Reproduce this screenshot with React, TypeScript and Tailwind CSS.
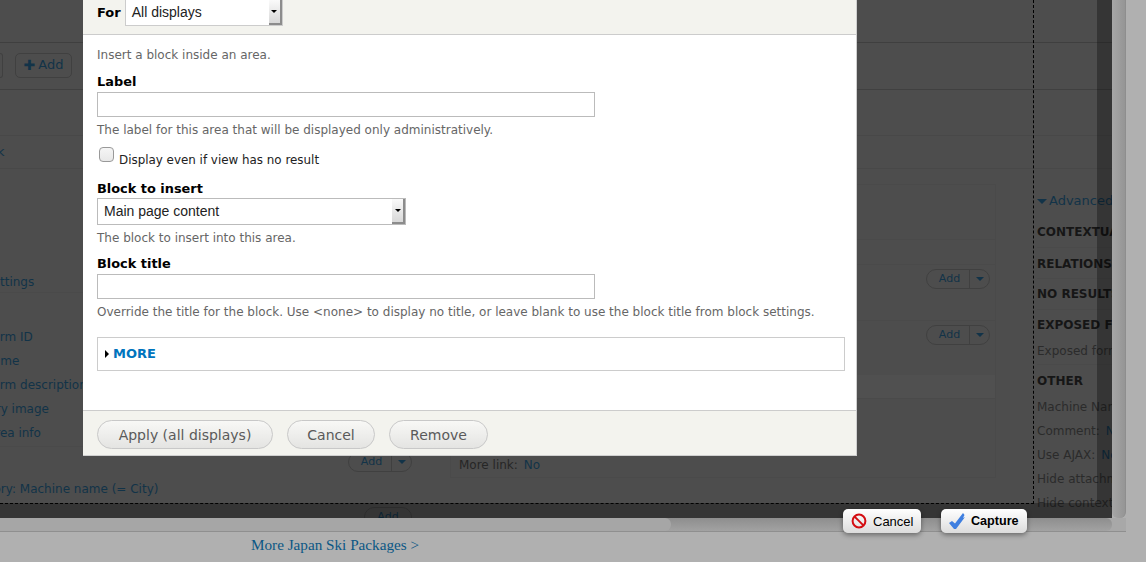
const sans = "font-['DejaVu_Sans',sans-serif]";
const arial = "font-['Liberation_Sans',Arial,sans-serif]";

const leftLinks = [
  { text: 'Form ID', indent: '-ml-[14px]' },
  { text: 'Name', indent: '-ml-[16px]' },
  { text: 'Form description', indent: '-ml-[14px]' },
  { text: 'Gallery image', indent: '-ml-[35px]' },
  { text: 'Area info', indent: '-ml-[13px]' },
];

function AddPill() {
  return (
    <div className="flex h-[20px] w-[64px] items-center rounded-full border border-[#404040] text-[11px] text-[#123348]">
      <span className="flex-1 pl-[3px] text-center">Add</span>
      <span className="flex h-full w-[20px] items-center justify-center border-l border-[#404040]">
        <span className="h-0 w-0 border-x-[4px] border-t-[4px] border-x-transparent border-t-[#123348]" />
      </span>
    </div>
  );
}

function FakeSelect({ label, className }: { label: string; className: string }) {
  return (
    <div className={`flex items-stretch border border-[#bbb] bg-white ${arial} text-[14px] text-[#222] ${className}`}>
      <span className="flex flex-1 items-center pl-[6px]">{label}</span>
      <span className="flex w-[13px] items-center justify-center border-r-2 border-b-2 border-[#8c8c8c] bg-gradient-to-b from-[#fafafa] to-[#d8d8d8]">
        <span className="h-0 w-0 border-x-[3px] border-t-[3px] border-x-transparent border-t-black" />
      </span>
    </div>
  );
}

function FooterButton({ children, className }: { children: string; className: string }) {
  return (
    <button className={`h-[29px] rounded-full border border-[#c8c8c8] bg-gradient-to-b from-[#f8f8f6] to-[#e4e4e2] pt-[1px] text-center text-[14px] text-[#5a5a5a] ${className}`}>
      {children}
    </button>
  );
}

function DimmedPage() {
  return (
    <div className={`relative h-[518px] w-[1112px] shrink-0 overflow-hidden bg-[#4d4d4d] ${sans} text-[12px] whitespace-nowrap`}>
      <div className="h-[43px] border-b border-[#3f3f3f]" />
      <div className="flex h-[47px] items-center gap-[12px] border-b border-[#404040] pb-[2px] text-[13px]">
        <div className="h-[25px] w-[3px] rounded-r-[5px] border border-l-0 border-[#404040]" />
        <div className="flex h-[25px] w-[57px] items-center justify-center gap-[3px] rounded-[5px] border border-[#404040] text-[#123348]">
          <span className="text-[14px] font-bold leading-none">✚</span>Add
        </div>
      </div>
      <div className="h-[46px] border-b border-[#484848]" />
      <div className="flex h-[33px] items-center border-b border-[#484848] text-[13px] text-[#123348]">
        <span className="-ml-[3px]">k</span>
      </div>

      <div className="mt-[15px] flex">
        {/* left column, mostly behind the dialog */}
        <div className="flex w-[416px] shrink-0 flex-col text-[#123348]">
          <div className="mt-[87px] flex h-[22px] items-center border-b border-[#4a4a4a]">
            <span className="-ml-[15px]">Settings</span>
          </div>
          <div className="mt-[34px] flex flex-col gap-[4px]">
            {leftLinks.map((link) => (
              <div key={link.text} className="flex h-[20px] items-center">
                <span className={link.indent}>{link.text}</span>
              </div>
            ))}
          </div>
          <div className="mt-[3px] flex justify-end border-t border-[#4a4a4a] pr-[4px] pt-[5px]">
            <AddPill />
          </div>
          <div className="mt-[7px] flex h-[20px] items-center">
            <span className="-ml-[42px]">Category: Machine name (= City)</span>
          </div>
          <div className="mt-[8px] flex justify-end pr-[4px]">
            <div className="flex h-[20px] w-[48px] items-center justify-center rounded-full border border-[#404040] text-[11px] text-[#123348]">
              Add
            </div>
          </div>
        </div>

        {/* middle column */}
        <div className="ml-[34px] flex h-[294px] w-[546px] shrink-0 flex-col border border-[#4a4a4a]">
          <div className="h-[55px] border-b border-[#4a4a4a]" />
          <div className="h-[25px] border-b border-[#4a4a4a]" />
          <div className="flex h-[56px] justify-end border-b border-[#4a4a4a] pr-[5px] pt-[4px]">
            <AddPill />
          </div>
          <div className="flex h-[54px] justify-end pr-[5px] pt-[4px]">
            <AddPill />
          </div>
          <div className="h-[24px] border-b border-[#4a4a4a] bg-[#505050]" />
          <div className="flex flex-1 items-end px-[8px] pb-[3px] text-[#262626]">
            More link:<span className="ml-[6px] text-[#123348]">No</span>
          </div>
        </div>

        {/* right column */}
        <div className="ml-[38px] flex flex-col pl-[3px] text-[#2b2b2b]">
          <div className="flex h-[32px] items-center gap-[2px] pt-[2px] text-[13px] text-[#123348]">
            <span className="h-0 w-0 border-x-[5px] border-t-[5px] border-x-transparent border-t-[#123348]" />
            Advanced
          </div>
          <div className="flex h-[32px] items-center border-b border-[#4a4a4a] font-bold text-[#161616]">CONTEXTUAL</div>
          <div className="flex h-[31px] items-center border-b border-[#4a4a4a] pt-[1px] font-bold text-[#161616]">RELATIONSHIPS</div>
          <div className="flex h-[31px] items-center border-b border-[#4a4a4a] font-bold text-[#161616]">NO RESULTS</div>
          <div className="flex h-[30px] items-center font-bold text-[#161616]">EXPOSED FORM</div>
          <div className="flex h-[25px] items-center border-b border-[#4a4a4a] pb-[3px]">Exposed form</div>
          <div className="flex h-[32px] items-center font-bold text-[#161616]">OTHER</div>
          <div className="flex h-[22px] items-center pb-[2px]">Machine Name</div>
          <div className="flex h-[24px] items-center">Comment:<span className="ml-[6px] text-[#123348]">No</span></div>
          <div className="flex h-[24px] items-center">Use AJAX:<span className="ml-[6px] text-[#123348]">No</span></div>
          <div className="flex h-[24px] items-center">Hide attachment</div>
          <div className="flex h-[24px] items-center">Hide contextual</div>
        </div>
      </div>

      {/* selection rectangle and its shade */}
      <div className="absolute left-0 top-0 h-[504px] w-[1034px] border-r border-b border-dashed border-black" />
      <div className="absolute bottom-0 left-0 h-[15px] w-full bg-black/30" />
      <div className="absolute right-0 top-0 h-[503px] w-[15px] bg-black/30" />
    </div>
  );
}

function BlockDialog() {
  return (
    <div className={`absolute left-[83px] top-0 flex h-[456px] w-[774px] flex-col border-r border-b border-[#cfcfcf] bg-white ${sans} text-[12px] text-[#666]`}>
      <div className="flex h-[35px] items-start gap-[4px] border-b border-[#ccc] bg-[#f3f3ee] pl-[14px]">
        <span className="pt-[3px] text-[13px] font-bold text-black">For</span>
        <FakeSelect label="All displays" className="h-[26px] w-[158px] border-t-0 border-[#ccc]" />
      </div>

      <div className="flex flex-1 flex-col px-[14px]">
        <p className="mt-[12px] h-[16px] leading-[16px]">Insert a block inside an area.</p>
        <label className="mt-[11px] h-[16px] text-[12.9px] font-bold leading-[16px] text-black">Label</label>
        <input className="mt-[2px] h-[25px] w-[498px] border border-[#bbb] bg-white" />
        <p className="mt-[5px] h-[16px] leading-[16px]">The label for this area that will be displayed only administratively.</p>
        <div className="mt-[9px] flex h-[19px] items-start">
          <input type="checkbox" className="ml-[2px] h-[15px] w-[15px] appearance-none rounded-[4px] border border-[#999] bg-gradient-to-b from-[#f5f5f5] to-[#e8e8e8]" />
          <span className="ml-[5px] pt-[5px] text-[11.9px] leading-[16px] text-[#222]">Display even if view has no result</span>
        </div>
        <label className="mt-[15px] h-[16px] text-[12.9px] font-bold leading-[16px] text-black">Block to insert</label>
        <FakeSelect label="Main page content" className="mt-[1px] h-[27px] w-[309px]" />
        <p className="mt-[5px] h-[16px] leading-[16px]">The block to insert into this area.</p>
        <label className="mt-[10px] h-[16px] text-[12.9px] font-bold leading-[16px] text-black">Block title</label>
        <input className="mt-[2px] h-[25px] w-[498px] border border-[#bbb] bg-white" />
        <p className="mt-[5px] h-[16px] leading-[16px]">
          {'Override the title for the block. Use <none> to display no title, or leave blank to use the block title from block settings.'}
        </p>
        <div className="mt-[17px] flex h-[34px] w-[748px] items-center gap-[4px] border border-[#ccc] pl-[7px]">
          <span className="h-0 w-0 border-y-[4px] border-l-[4px] border-y-transparent border-l-black" />
          <span className="text-[13px] font-bold text-[#0074bd]">MORE</span>
        </div>
      </div>

      <div className="flex h-[45px] items-start gap-[14px] border-t border-[#ccc] bg-[#f3f3ee] pl-[14px] pt-[9px]">
        <FooterButton className="w-[176px]">Apply (all displays)</FooterButton>
        <FooterButton className="w-[88px]">Cancel</FooterButton>
        <FooterButton className="w-[99px]">Remove</FooterButton>
      </div>
    </div>
  );
}

function CaptureBar() {
  return (
    <div className={`absolute left-[843px] top-[509px] flex gap-[20px] ${arial} text-[13px] text-black`}>
      <button className="flex h-[24px] w-[78px] items-center gap-[6px] rounded-[5px] bg-gradient-to-b from-white to-[#dcdcdc] pl-[8px] shadow-[0_2px_5px_rgba(0,0,0,0.4)]">
        <svg width="16" height="16" viewBox="0 0 16 16" fill="none" stroke="#d40d12" strokeWidth="2">
          <circle cx="8" cy="8" r="6.4" />
          <path d="M3.6 3.6l8.8 8.8" />
        </svg>
        <span className="pt-[1px]">Cancel</span>
      </button>
      <button className="flex h-[24px] w-[86px] items-center gap-[5px] rounded-[5px] bg-gradient-to-b from-white to-[#dcdcdc] pl-[7px] font-bold shadow-[0_2px_5px_rgba(0,0,0,0.4)]">
        <svg width="18" height="18" viewBox="0 0 18 18" fill="#3f7fe0">
          <path d="M1 11L4 9L7 11.5L15 1L16.5 3L15 6L17 5L8 17L6 17Z" />
        </svg>
        <span className="pt-[1px] text-[12.6px]">Capture</span>
      </button>
    </div>
  );
}

export default function App() {
  return (
    <div className="relative h-[562px] w-[1146px] overflow-hidden bg-[#b0b0b0]">
      <div className="flex h-[518px]">
        <DimmedPage />
        <div className="h-full w-[14px] rounded-b-[6px] border-r border-[#8e8e8e] bg-gradient-to-r from-[#a6a6a6] to-[#959595]" />
      </div>

      <div className="flex h-[14px] w-[1126px] border-b border-[#8f8f8f] bg-[#a8a8a8]">
        <div className="flex h-full w-[1112px] rounded-r-[6px] bg-gradient-to-b from-[#8e8e8e] to-[#a2a2a2]">
          <div className="h-full w-[671px] rounded-r-[6px] bg-[#a6a6a6]" />
        </div>
      </div>

      <div className="pl-[251px] pt-[2px] font-['Liberation_Serif',serif] text-[15.2px] text-[#0b5785]">
        More Japan Ski Packages &gt;
      </div>

      <BlockDialog />
      <CaptureBar />
    </div>
  );
}
